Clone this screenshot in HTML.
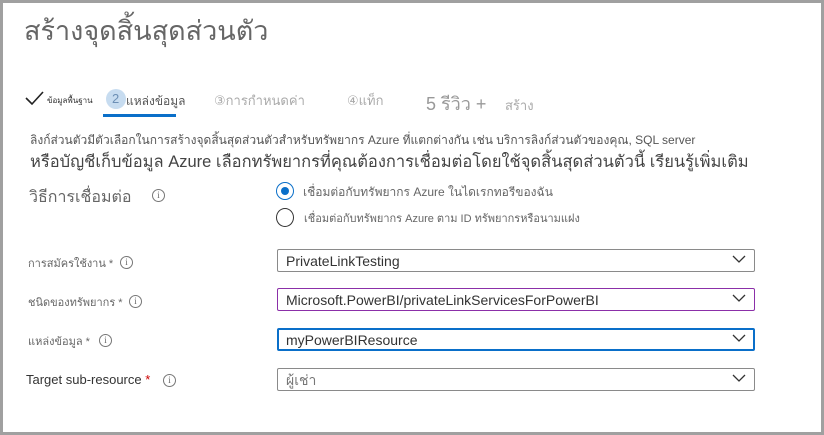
<!DOCTYPE html>
<html><head><meta charset="utf-8"><style>
*{box-sizing:border-box;margin:0;padding:0}
body{width:824px;height:435px;background:#a0a0a0;font-family:"Liberation Sans","DejaVu Sans",sans-serif;overflow:hidden;position:relative}
.page{position:absolute;left:3px;top:3px;width:818px;height:429px;background:#fff}
.a{position:absolute;white-space:nowrap}
.g{color:#777}
.box{position:absolute;left:277px;width:478px;height:23px;border:1px solid #8a8a8a;border-radius:2px;font-size:14px;color:#333;padding:2px 8px;line-height:18px}
.chev{position:absolute;right:8px;top:5px}
.info{position:absolute;width:13px;height:13px;border:1px solid #777;border-radius:50%;font-size:9px;line-height:11px;text-align:center;color:#666;font-family:"Liberation Serif",serif}
.lbl{font-size:11px;color:#666}
</style></head><body>
<div class="page"></div>
<div class="a g" style="left:24px;top:9px;font-size:27px;color:#666">สร้างจุดสิ้นสุดส่วนตัว</div>

<svg class="a" style="left:25px;top:90px" width="20" height="16"><path d="M1 8 L7 14 L18 2" fill="none" stroke="#222" stroke-width="1.6"/></svg>
<div class="a" style="left:47px;top:94px;font-size:8px;color:#333">ข้อมูลพื้นฐาน</div>
<div class="a" style="left:106px;top:89px;width:20px;height:20px;border-radius:50%;background:#c7dcf0"></div>
<div class="a" style="left:112px;top:91px;font-size:13px;color:#6c8fb5">2</div>
<div class="a" style="left:126px;top:92px;font-size:12px;color:#555">แหล่งข้อมูล</div>
<div class="a" style="left:103px;top:114px;width:73px;height:3px;background:#0a6fc9"></div>
<div class="a" style="left:214px;top:90px;font-size:13px;color:#aaa">③การกำหนดค่า</div>
<div class="a" style="left:347px;top:90px;font-size:13px;color:#aaa">④แท็ก</div>
<div class="a" style="left:426px;top:89px;font-size:18px;color:#999">5 รีวิว +</div>
<div class="a" style="left:505px;top:95px;font-size:13px;color:#aaa">สร้าง</div>

<div class="a" style="left:30px;top:131px;font-size:12px;color:#555">ลิงก์ส่วนตัวมีตัวเลือกในการสร้างจุดสิ้นสุดส่วนตัวสำหรับทรัพยากร Azure ที่แตกต่างกัน เช่น บริการลิงก์ส่วนตัวของคุณ, SQL server</div>
<div class="a" style="left:30px;top:149px;font-size:16.5px;color:#444">หรือบัญชีเก็บข้อมูล Azure เลือกทรัพยากรที่คุณต้องการเชื่อมต่อโดยใช้จุดสิ้นสุดส่วนตัวนี้ เรียนรู้เพิ่มเติม</div>

<div class="a" style="left:29px;top:185px;font-size:16px;color:#666">วิธีการเชื่อมต่อ</div>
<div class="info" style="left:152px;top:189px">i</div>
<div class="a" style="left:276px;top:182px;width:18px;height:18px;border:1px solid #0a6fc9;border-radius:50%"></div>
<div class="a" style="left:281px;top:187px;width:8px;height:8px;background:#0a6fc9;border-radius:50%"></div>
<div class="a" style="left:303px;top:183px;font-size:12px;color:#666">เชื่อมต่อกับทรัพยากร Azure ในไดเรกทอรีของฉัน</div>
<div class="a" style="left:276px;top:208px;width:18px;height:19px;border:1px solid #333;border-radius:50%"></div>
<div class="a" style="left:304px;top:209px;font-size:11px;color:#666">เชื่อมต่อกับทรัพยากร Azure ตาม ID ทรัพยากรหรือนามแฝง</div>

<div class="a lbl" style="left:28px;top:254px">การสมัครใช้งาน *</div>
<div class="info" style="left:120px;top:256px">i</div>
<div class="box" style="top:249px">PrivateLinkTesting<svg class="chev" width="14" height="9"><path d="M1 1 L7 7 L13 1" fill="none" stroke="#333" stroke-width="1.3"/></svg></div>

<div class="a lbl" style="left:28px;top:293px">ชนิดของทรัพยากร *</div>
<div class="info" style="left:129px;top:295px">i</div>
<div class="box" style="top:288px;border-color:#8b2fa8">Microsoft.PowerBI/privateLinkServicesForPowerBI<svg class="chev" width="14" height="9"><path d="M1 1 L7 7 L13 1" fill="none" stroke="#333" stroke-width="1.3"/></svg></div>

<div class="a lbl" style="left:28px;top:332px">แหล่งข้อมูล *</div>
<div class="info" style="left:99px;top:334px">i</div>
<div class="box" style="top:328px;border:2px solid #0a6fc9;padding:1px 7px">myPowerBIResource<svg class="chev" width="14" height="9" style="right:7px;top:4px"><path d="M1 1 L7 7 L13 1" fill="none" stroke="#333" stroke-width="1.3"/></svg></div>

<div class="a" style="left:26px;top:372px;font-size:13px;color:#333">Target sub-resource <span style="color:#c00">*</span></div>
<div class="info" style="left:163px;top:374px">i</div>
<div class="box" style="top:368px;color:#777">ผู้เช่า<svg class="chev" width="14" height="9"><path d="M1 1 L7 7 L13 1" fill="none" stroke="#333" stroke-width="1.3"/></svg></div>
</body></html>
